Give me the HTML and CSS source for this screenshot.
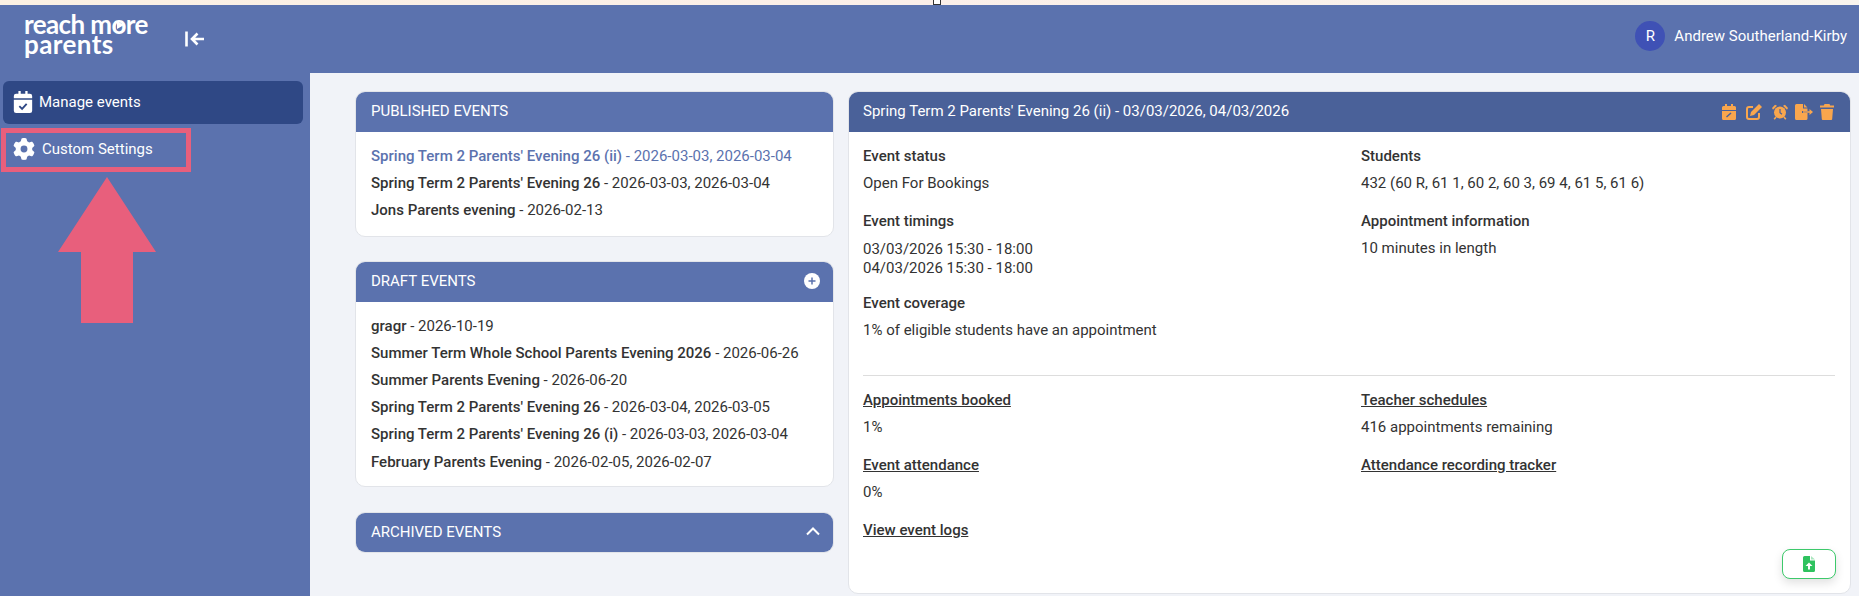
FILE: index.html
```html
<!DOCTYPE html>
<html lang="en">
<head>
  <meta charset="UTF-8" />
  <meta name="viewport" content="width=device-width, initial-scale=1.0" />
  <title>Reach More Parents - Manage events</title>
  <link rel="stylesheet" href="styles.css">
</head>
<body>
<div class="browser-strip"><span class="cursor-mark"></span></div>

<header class="topbar">
  <div class="brand">
    <div class="logo">reach m<span class="logo-o">o</span>re<br><span class="logo-second">parents</span></div>
    <svg class="collapse-icon" viewBox="0 0 20 16" aria-hidden="true">
      <path d="M1.5 0.5v15" stroke="#fff" stroke-width="2.6" fill="none"/>
      <path d="M19 8H7.5M12.5 2.5 7 8l5.500 5.500" stroke="#fff" stroke-width="2.600" fill="none"/>
    </svg>
  </div>
  <div class="user">
    <span class="avatar">R</span>
    <span class="user-name">Andrew Southerland-Kirby</span>
  </div>
</header>

<div class="page">
  <aside class="sidebar">
    <a class="nav-item active">
      <svg class="nav-icon" viewBox="0 0 20 24" aria-hidden="true">
        <path fill="#fff" d="M5 0h2.500v3h5V0H15v3h2.500A2.500 2.500 0 0 1 20 5.500V8H0V5.500A2.500 2.500 0 0 1 2.500 3H5zM0 9.500h20v12A2.500 2.500 0 0 1 17.500 24h-15A2.500 2.500 0 0 1 0 21.500z"/>
        <path fill="none" stroke="#2f4885" stroke-width="2" d="M6 16.500l3 3 5-5.500"/>
      </svg>
      Manage events
    </a>
    <a class="nav-item settings">
      <svg class="nav-icon gear" viewBox="0 0 512 512" aria-hidden="true">
        <path fill="#fff" d="M495.900 166.600c3.200 8.700.5 18.400-6.400 24.600l-43.300 39.400c1.100 8.300 1.700 16.800 1.700 25.400s-.6 17.100-1.700 25.400l43.300 39.400c6.900 6.200 9.600 15.900 6.400 24.600-4.400 11.900-9.700 23.300-15.800 34.300l-4.700 8.100c-6.600 11-14 21.400-22.100 31.200-5.900 7.200-15.700 9.600-24.500 6.800l-55.700-17.700c-13.400 10.300-28.200 18.900-44 25.400l-12.500 57.100c-2 9.100-9 16.300-18.200 17.800-13.800 2.300-28 3.500-42.500 3.500s-28.700-1.200-42.500-3.500c-9.200-1.500-16.200-8.700-18.200-17.800l-12.500-57.100c-15.800-6.500-30.600-15.100-44-25.400l-55.600 17.800c-8.800 2.800-18.600.3-24.500-6.800-8.100-9.800-15.500-20.200-22.100-31.200l-4.700-8.100c-6.100-11-11.400-22.400-15.800-34.300-3.200-8.700-.5-18.400 6.400-24.600l43.300-39.400c-1.100-8.400-1.700-16.900-1.700-25.500s.6-17.100 1.700-25.400l-43.300-39.400c-6.900-6.200-9.600-15.900-6.400-24.600 4.400-11.900 9.700-23.300 15.800-34.300l4.700-8.100c6.600-11 14-21.400 22.100-31.200 5.900-7.200 15.700-9.600 24.500-6.800l55.700 17.700c13.400-10.300 28.200-18.900 44-25.400l12.500-57.100c2-9.100 9-16.300 18.200-17.800C227.300 1.200 241.500 0 256 0s28.700 1.200 42.500 3.500c9.200 1.500 16.200 8.700 18.200 17.800l12.500 57.100c15.800 6.500 30.600 15.100 44 25.400l55.700-17.700c8.800-2.800 18.600-.3 24.500 6.800 8.100 9.800 15.500 20.200 22.100 31.200l4.700 8.100c6.100 11 11.400 22.400 15.800 34.300zM256 336a80 80 0 1 0 0-160 80 80 0 1 0 0 160z"/>
      </svg>
      Custom Settings
    </a>
    <svg class="pointer-arrow" viewBox="0 0 98 146" aria-hidden="true">
      <path fill="#e85f7c" d="M49 0 98 75H75v71H23V75H0z"/>
    </svg>
  </aside>

  <main class="content">
    <section class="lists">
      <div class="card">
        <div class="card-header"><span>PUBLISHED EVENTS</span></div>
        <ul class="event-list published">
          <li class="selected"><b>Spring Term 2 Parents' Evening 26 (ii)</b> - 2026-03-03, 2026-03-04</li>
          <li><b>Spring Term 2 Parents' Evening 26</b> - 2026-03-03, 2026-03-04</li>
          <li><b>Jons Parents evening</b> - 2026-02-13</li>
        </ul>
      </div>

      <div class="card">
        <div class="card-header">
          <span>DRAFT EVENTS</span>
          <svg class="plus-icon" viewBox="0 0 16 16" aria-hidden="true">
            <circle cx="8" cy="8" r="8" fill="#fff"/>
            <path d="M8 4.500v7M4.500 8h7" stroke="#5b72ae" stroke-width="1.500"/>
          </svg>
        </div>
        <ul class="event-list">
          <li><b>gragr</b> - 2026-10-19</li>
          <li><b>Summer Term Whole School Parents Evening 2026</b> - 2026-06-26</li>
          <li><b>Summer Parents Evening</b> - 2026-06-20</li>
          <li><b>Spring Term 2 Parents' Evening 26</b> - 2026-03-04, 2026-03-05</li>
          <li><b>Spring Term 2 Parents' Evening 26 (i)</b> - 2026-03-03, 2026-03-04</li>
          <li class="last-row"><b>February Parents Evening</b> - 2026-02-05, 2026-02-07</li>
        </ul>
      </div>

      <div class="card collapsed">
        <div class="card-header">
          <span>ARCHIVED EVENTS</span>
          <svg class="chevron-icon" viewBox="0 0 14 9" aria-hidden="true">
            <path d="M1 7.500 7 1.500l6 6" stroke="#fff" stroke-width="2" fill="none"/>
          </svg>
        </div>
      </div>
    </section>

    <section class="card detail">
      <div class="card-header dark">
        <span>Spring Term 2 Parents' Evening 26 (ii) - 03/03/2026, 04/03/2026</span>
        <div class="actions">
          <svg class="wide" viewBox="0 0 14 16" width="14" height="16" aria-hidden="true">
            <path fill="#f9a64d" d="M3 0h2v2h4V0h2v2h1.500A1.500 1.500 0 0 1 14 3.500V6H0V3.500A1.500 1.500 0 0 1 1.500 2H3zM0 7h14v7.500a1.500 1.500 0 0 1-1.500 1.500h-11A1.500 1.500 0 0 1 0 14.500z"/>
            <path stroke="#4a6199" stroke-width="1.500" d="M4.500 13 9 9"/>
          </svg>
          <svg class="wide" viewBox="0 0 16 16" width="16" height="16" aria-hidden="true">
            <path fill="none" stroke="#f9a64d" stroke-width="2" d="M7 3H3a2 2 0 0 0-2 2v8a2 2 0 0 0 2 2h8a2 2 0 0 0 2-2V9"/>
            <path fill="#f9a64d" d="M13 0l3 3-8 8-4 1 1-4z"/>
          </svg>
          <svg viewBox="0 0 16 16" width="16" height="16" aria-hidden="true">
            <circle cx="8" cy="8.500" r="6" fill="#f9a64d"/>
            <path fill="#f9a64d" d="M0 4 3 .8 5 1.800 1 5.800zM16 4 13 .8 11 1.800l4 4z"/>
            <path stroke="#f9a64d" stroke-width="1.600" d="M4 13l-1.800 2.200M12 13l1.800 2.200"/>
            <path fill="none" stroke="#4a6199" stroke-width="1.200" d="M8 5v3.800l2 1.500"/>
          </svg>
          <svg viewBox="0 0 18 16" width="18" height="16" aria-hidden="true">
            <path fill="#f9a64d" d="M1.500 0H8v4.500h4.500V7H7v2h5.500v5.500A1.500 1.500 0 0 1 11 16H1.500A1.500 1.500 0 0 1 0 14.500v-13A1.500 1.500 0 0 1 1.500 0zM9 0l3.500 3.500H9z"/>
            <path fill="#f9a64d" d="M8 7.200h6.500V5l3.500 3-3.500 3V8.800H8z"/>
          </svg>
          <svg viewBox="0 0 14 16" width="14" height="16" aria-hidden="true">
            <path fill="#f9a64d" d="M4.500 0h5l.7 1.500H14v2H0v-2h3.800zM1 5h12l-.8 10a1 1 0 0 1-1 1H2.800a1 1 0 0 1-1-1z"/>
          </svg>
        </div>
      </div>

      <div class="detail-body">
        <div class="detail-grid top">
          <div class="detail-col">
            <div class="field">
              <h4>Event status</h4>
              <p>Open For Bookings</p>
            </div>
            <div class="field">
              <h4>Event timings</h4>
              <p class="tight">03/03/2026 15:30 - 18:00<br>04/03/2026 15:30 - 18:00</p>
            </div>
            <div class="field">
              <h4>Event coverage</h4>
              <p>1% of eligible students have an appointment</p>
            </div>
          </div>
          <div class="detail-col">
            <div class="field">
              <h4>Students</h4>
              <p>432 (60 R, 61 1, 60 2, 60 3, 69 4, 61 5, 61 6)</p>
            </div>
            <div class="field">
              <h4>Appointment information</h4>
              <p>10 minutes in length</p>
            </div>
          </div>
        </div>

        <hr class="divider">

        <div class="detail-grid">
          <div class="detail-col">
            <div class="field">
              <h4><a>Appointments booked</a></h4>
              <p>1%</p>
            </div>
            <div class="field">
              <h4><a>Event attendance</a></h4>
              <p>0%</p>
            </div>
            <div class="field">
              <h4><a>View event logs</a></h4>
            </div>
          </div>
          <div class="detail-col">
            <div class="field">
              <h4><a>Teacher schedules</a></h4>
              <p>416 appointments remaining</p>
            </div>
            <div class="field">
              <h4><a>Attendance recording tracker</a></h4>
            </div>
          </div>
        </div>
      </div>

      <button class="export-btn" aria-label="Export">
        <svg viewBox="0 0 12 16" width="12" height="16" aria-hidden="true">
          <path fill="#2fc25f" d="M1.500 0H7v4.500h5v10A1.500 1.500 0 0 1 10.500 16h-9A1.500 1.500 0 0 1 0 14.500v-13A1.500 1.500 0 0 1 1.500 0z"/>
          <path fill="#a9e6bd" d="M8 0l4 3.500H8z"/>
          <path fill="#fff" d="M6 6.500 9.500 10H7v3.500H5V10H2.500z"/>
        </svg>
      </button>
    </section>
  </main>
</div>
</body>
</html>
```

FILE: styles.css
```css
* {
  box-sizing: border-box;
  margin: 0;
  padding: 0;
}

html, body {
  height: 596px;
  overflow: hidden;
}

body {
  font-family: Roboto, 'Liberation Sans', sans-serif;
  font-size: 15px;
  color: #333;
  background-color: #f1f3f8;
}

.browser-strip {
  height: 5px;
  background: linear-gradient(to right, #fbf0e3, #fbefe9 50%, #f8f4ee);
  display: flex;
  justify-content: center;
}

.cursor-mark {
  width: 8px;
  height: 5px;
  background-color: #fff;
  border: 1px solid #333;
  border-top: none;
  margin-left: 15px;
}

.topbar {
  height: 68px;
  background-color: #5b72ae;
  color: white;
  display: flex;
  justify-content: space-between;
  padding: 9px 12px 0 24px;
}

.brand {
  display: flex;
  align-items: flex-start;
}

.logo {
  font-family: Lato, sans-serif;
  font-size: 26px;
  font-weight: 700;
  line-height: 20px;
  letter-spacing: -0.6px;
  width: 130px;
  white-space: nowrap;
}

.logo-second {
  letter-spacing: 0.4px;
}

.logo-o {
  position: relative;
  display: inline-block;
}

.logo-o::after {
  content: "";
  position: absolute;
  left: 5px;
  top: 7px;
  border-left: 7px solid white;
  border-top: 4px solid transparent;
  border-bottom: 4px solid transparent;
}

.collapse-icon {
  width: 20px;
  height: 16px;
  margin: 17px 0 0 31px;
}

.user {
  display: flex;
  align-items: center;
  gap: 9px;
  height: 44px;
}

.avatar {
  width: 30px;
  height: 30px;
  border-radius: 50%;
  background-color: #3f51b5;
  display: flex;
  align-items: center;
  justify-content: center;
}

.page {
  display: flex;
  height: 523px;
}

.sidebar {
  width: 310px;
  height: 100%;
  background-color: #5b72ae;
  padding: 8px 7px 0 3px;
  flex-shrink: 0;
  color: white;
}

.nav-item {
  display: flex;
  align-items: center;
  height: 43px;
  padding: 0 0 2px 10px;
  gap: 6px;
  border-radius: 6px;
}

.nav-item.active {
  background-color: #2f4885;
}

.nav-item.settings {
  width: 190px;
  height: 44px;
  margin: 4px 0 0 -2px;
  border: 5px solid #e85f7c;
  border-radius: 0;
  padding-left: 8px;
  gap: 7px;
}

.nav-icon {
  width: 20px;
  height: 22px;
  flex-shrink: 0;
}

.nav-icon.gear {
  width: 22px;
  margin-left: -1px;
}

.pointer-arrow {
  display: block;
  width: 98px;
  height: 146px;
  margin: 5px 0 0 55px;
}

.content {
  flex: 1;
  display: flex;
  align-items: flex-start;
  gap: 14px;
  padding: 18px 8px 0 45px;
}

.lists {
  width: 479px;
  display: flex;
  flex-direction: column;
  gap: 24px;
}

.card {
  background-color: #fff;
  border: 1px solid #e2e4e9;
  border-radius: 10px;
  overflow: hidden;
}

.card-header {
  height: 40px;
  background-color: #5b72ae;
  color: white;
  padding: 0 13px 3px 15px;
  display: flex;
  align-items: center;
  justify-content: space-between;
}

.card-header.dark {
  background-color: #4a6199;
  padding-left: 14px;
}

.collapsed {
  margin-top: 1px;
}

.collapsed .card-header {
  height: 39px;
  padding-bottom: 2px;
}

.plus-icon {
  width: 16px;
  height: 16px;
}

.chevron-icon {
  width: 14px;
  height: 9px;
}

.event-list {
  list-style: none;
  padding: 11px 15px 11px;
}

.event-list.published {
  padding-bottom: 12px;
}

.event-list li {
  height: 27px;
  line-height: 27px;
  white-space: nowrap;
}

.event-list li.last-row {
  padding-top: 1px;
}

.event-list b {
  font-weight: 500;
}

.event-list .selected {
  color: #5b72ae;
}

.detail {
  position: relative;
  flex: 1;
  height: 503px;
}

.actions {
  display: flex;
  align-items: center;
  gap: 7px;
  margin: 3px 3px 0 0;
}

.actions .wide {
  margin-right: 3px;
}

.detail-body {
  padding: 11px 15px 0 14px;
}

.detail-grid {
  display: grid;
  grid-template-columns: 498px 1fr;
}

.detail-grid.top {
  height: 232px;
}

.field {
  margin-bottom: 11px;
}

.field h4 {
  font-size: 15px;
  font-weight: 500;
  line-height: 27px;
}

.field h4 a {
  text-decoration: underline;
}

.field p {
  line-height: 27px;
}

.field p.tight {
  line-height: 19px;
  padding-top: 5px;
  padding-bottom: 1px;
}

.divider {
  border: none;
  border-top: 1px solid #ddd;
  margin-bottom: 11px;
}

.export-btn {
  position: absolute;
  right: 14px;
  bottom: 14px;
  width: 54px;
  height: 30px;
  background-color: #fff;
  border: 1.5px solid #3dc96b;
  border-radius: 8px;
  box-shadow: 0 4px 10px rgba(0,0,0,0.12);
  display: flex;
  align-items: center;
  justify-content: center;
}
```
